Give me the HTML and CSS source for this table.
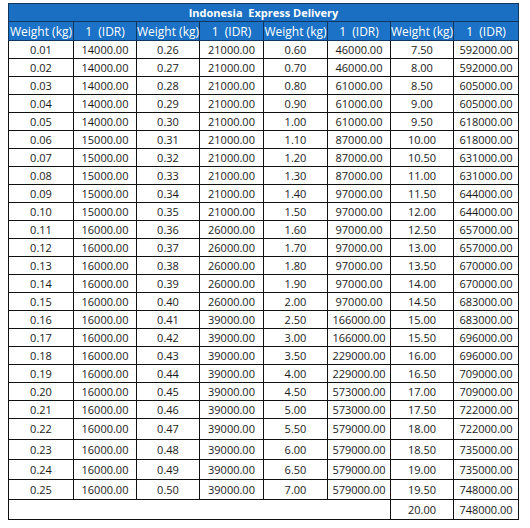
FILE: index.html
```html
<!DOCTYPE html>
<html>
<head>
<meta charset="utf-8">
<link rel="stylesheet" href="styles.css">
</head>
<body>
<table class="rates">
<colgroup>
<col class="c1"><col class="c2"><col class="c3"><col class="c4"><col class="c5"><col class="c6"><col class="c7"><col class="c8">
</colgroup>
<tr class="title"><th colspan="8">Indonesia&nbsp; Express Delivery</th></tr>
<tr class="head"><th>Weight (kg)</th><th>1&nbsp; (IDR)</th><th>Weight (kg)</th><th>1&nbsp; (IDR)</th><th>Weight (kg)</th><th>1&nbsp; (IDR)</th><th>Weight (kg)</th><th>1&nbsp; (IDR)</th></tr>
<tr><td>0.01</td><td>14000.00</td><td>0.26</td><td>21000.00</td><td>0.60</td><td>46000.00</td><td>7.50</td><td>592000.00</td></tr>
<tr><td>0.02</td><td>14000.00</td><td>0.27</td><td>21000.00</td><td>0.70</td><td>46000.00</td><td>8.00</td><td>592000.00</td></tr>
<tr><td>0.03</td><td>14000.00</td><td>0.28</td><td>21000.00</td><td>0.80</td><td>61000.00</td><td>8.50</td><td>605000.00</td></tr>
<tr><td>0.04</td><td>14000.00</td><td>0.29</td><td>21000.00</td><td>0.90</td><td>61000.00</td><td>9.00</td><td>605000.00</td></tr>
<tr><td>0.05</td><td>14000.00</td><td>0.30</td><td>21000.00</td><td>1.00</td><td>61000.00</td><td>9.50</td><td>618000.00</td></tr>
<tr><td>0.06</td><td>15000.00</td><td>0.31</td><td>21000.00</td><td>1.10</td><td>87000.00</td><td>10.00</td><td>618000.00</td></tr>
<tr><td>0.07</td><td>15000.00</td><td>0.32</td><td>21000.00</td><td>1.20</td><td>87000.00</td><td>10.50</td><td>631000.00</td></tr>
<tr><td>0.08</td><td>15000.00</td><td>0.33</td><td>21000.00</td><td>1.30</td><td>87000.00</td><td>11.00</td><td>631000.00</td></tr>
<tr><td>0.09</td><td>15000.00</td><td>0.34</td><td>21000.00</td><td>1.40</td><td>97000.00</td><td>11.50</td><td>644000.00</td></tr>
<tr><td>0.10</td><td>15000.00</td><td>0.35</td><td>21000.00</td><td>1.50</td><td>97000.00</td><td>12.00</td><td>644000.00</td></tr>
<tr><td>0.11</td><td>16000.00</td><td>0.36</td><td>26000.00</td><td>1.60</td><td>97000.00</td><td>12.50</td><td>657000.00</td></tr>
<tr><td>0.12</td><td>16000.00</td><td>0.37</td><td>26000.00</td><td>1.70</td><td>97000.00</td><td>13.00</td><td>657000.00</td></tr>
<tr><td>0.13</td><td>16000.00</td><td>0.38</td><td>26000.00</td><td>1.80</td><td>97000.00</td><td>13.50</td><td>670000.00</td></tr>
<tr><td>0.14</td><td>16000.00</td><td>0.39</td><td>26000.00</td><td>1.90</td><td>97000.00</td><td>14.00</td><td>670000.00</td></tr>
<tr><td>0.15</td><td>16000.00</td><td>0.40</td><td>26000.00</td><td>2.00</td><td>97000.00</td><td>14.50</td><td>683000.00</td></tr>
<tr><td>0.16</td><td>16000.00</td><td>0.41</td><td>39000.00</td><td>2.50</td><td>166000.00</td><td>15.00</td><td>683000.00</td></tr>
<tr><td>0.17</td><td>16000.00</td><td>0.42</td><td>39000.00</td><td>3.00</td><td>166000.00</td><td>15.50</td><td>696000.00</td></tr>
<tr><td>0.18</td><td>16000.00</td><td>0.43</td><td>39000.00</td><td>3.50</td><td>229000.00</td><td>16.00</td><td>696000.00</td></tr>
<tr><td>0.19</td><td>16000.00</td><td>0.44</td><td>39000.00</td><td>4.00</td><td>229000.00</td><td>16.50</td><td>709000.00</td></tr>
<tr><td>0.20</td><td>16000.00</td><td>0.45</td><td>39000.00</td><td>4.50</td><td>573000.00</td><td>17.00</td><td>709000.00</td></tr>
<tr><td>0.21</td><td>16000.00</td><td>0.46</td><td>39000.00</td><td>5.00</td><td>573000.00</td><td>17.50</td><td>722000.00</td></tr>
<tr class="tall first-tall"><td>0.22</td><td>16000.00</td><td>0.47</td><td>39000.00</td><td>5.50</td><td>579000.00</td><td>18.00</td><td>722000.00</td></tr>
<tr class="tall"><td>0.23</td><td>16000.00</td><td>0.48</td><td>39000.00</td><td>6.00</td><td>579000.00</td><td>18.50</td><td>735000.00</td></tr>
<tr class="tall"><td>0.24</td><td>16000.00</td><td>0.49</td><td>39000.00</td><td>6.50</td><td>579000.00</td><td>19.00</td><td>735000.00</td></tr>
<tr class="tall"><td>0.25</td><td>16000.00</td><td>0.50</td><td>39000.00</td><td>7.00</td><td>579000.00</td><td>19.50</td><td>748000.00</td></tr>
<tr class="tall last"><td colspan="6"></td><td>20.00</td><td>748000.00</td></tr>
</table>
</body>
</html>
```
FILE: styles.css
```css
html, body {
  background: #ffffff;
}
body {
  margin: 3px 8px;
  font-family: "Open Sans", "Noto Sans", "Liberation Sans", sans-serif;
  font-size: 11px;
  color: #1a1a1a;
}
.rates {
  border-collapse: collapse;
  table-layout: fixed;
  width: 511px;
}
.c1, .c8 { width: 65px; }
.c2, .c3, .c6, .c7 { width: 63px; }
.c4, .c5 { width: 64px; }
.rates td {
  border: 1px solid #111111;
  text-align: center;
  padding: 0;
  height: 17px;
  line-height: 14px;
  white-space: nowrap;
}
.rates tr.tall td {
  height: 19px;
}
.rates tr.first-tall td {
  height: 20px;
}
.title th {
  background: #1a6fc3;
  color: #ffffff;
  font-weight: 700;
  font-size: 11px;
  height: 17px;
  padding: 0;
  border: 1px solid #12365c;
  line-height: 14px;
}
.head th {
  background: #1b72c6;
  color: #ffffff;
  font-weight: 400;
  font-size: 12px;
  height: 18px;
  padding: 0;
  border: 1px solid #12365c;
  white-space: nowrap;
  line-height: 15px;
}
```
